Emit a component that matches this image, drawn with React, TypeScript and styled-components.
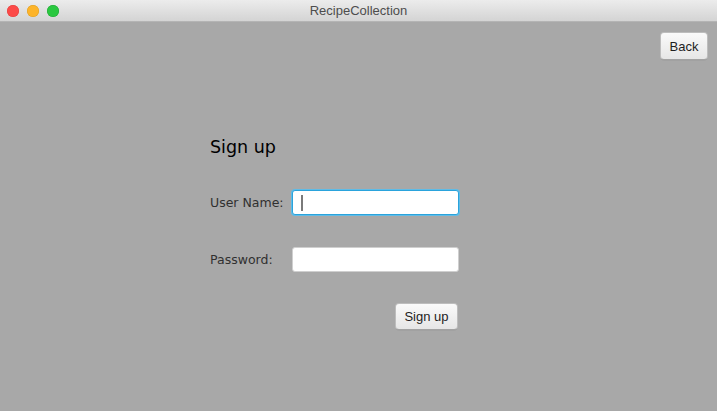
import React from "react";
import styled, { createGlobalStyle } from "styled-components";

const Global = createGlobalStyle`
  html, body { margin: 0; padding: 0; background: #a8a8a8; }
  * { box-sizing: border-box; }
`;

const Window = styled.div`
  width: 717px;
  height: 411px;
  background: #a8a8a8;
  display: flex;
  flex-direction: column;
  overflow: hidden;
`;

const TitleBar = styled.div`
  height: 22px;
  flex: none;
  position: relative;
  display: flex;
  align-items: center;
  justify-content: center;
  background: linear-gradient(#ececec, #d4d4d4);
  border-bottom: 1px solid #b4b4b4;
  font-family: "Liberation Sans", Arial, sans-serif;
  font-size: 13px;
  color: #4d4d4d;
`;

const Lights = styled.div`
  position: absolute;
  left: 7px;
  top: 5px;
  display: flex;
  gap: 8px;
`;

const Light = styled.span<{ $c: string; $b: string }>`
  width: 12px;
  height: 12px;
  border-radius: 50%;
  background: ${(p) => p.$c};
  box-shadow: inset 0 0 0 0.5px ${(p) => p.$b};
`;

const Body = styled.div`
  flex: 1;
  display: flex;
  flex-direction: column;
  padding: 10px 9px 0 210px;
`;

const TopRow = styled.div`
  display: flex;
  justify-content: flex-end;
`;

const Button = styled.button<{ $w: number; $h: number }>`
  width: ${(p) => p.$w}px;
  height: ${(p) => p.$h}px;
  padding: 0;
  border: 1px solid #bdbdbd;
  border-bottom-color: #a2a2a2;
  border-radius: 4px;
  background: linear-gradient(#fafafa, #e6e6e6);
  font-family: "Liberation Sans", Arial, sans-serif;
  font-size: 13px;
  color: #1e1e1e;
  box-shadow: 0 0.5px 0 rgba(0, 0, 0, 0.08);
`;

const Form = styled.div`
  margin-top: 76px;
  width: 249px;
  display: grid;
  grid-template-columns: 82px 167px;
  row-gap: 32px;
  align-items: center;
`;

const Title = styled.div`
  grid-column: 1 / 3;
  height: 22px;
  line-height: 22px;
  font-family: "DejaVu Sans", sans-serif;
  font-size: 17.5px;
  color: #000;
`;

const Label = styled.label`
  font-family: "DejaVu Sans", sans-serif;
  font-size: 12.5px;
  color: #303030;
`;

const Field = styled.div<{ $focus?: boolean }>`
  position: relative;
  height: 25px;
  background: #fff;
  border-radius: 3px;
  border: 1px solid ${(p) => (p.$focus ? "#2aa3dc" : "#cfcfcf")};
  box-shadow: ${(p) => (p.$focus ? "0 0 0 1px #5fbbe6" : "none")};
`;

const Caret = styled.span`
  position: absolute;
  left: 8px;
  top: 4px;
  width: 2px;
  height: 16px;
  background: #7a7a7a;
`;

const ButtonCell = styled.div`
  grid-column: 1 / 3;
  display: flex;
  justify-content: flex-end;
  padding-right: 1px;
  margin-top: -1px;
`;

export default function App() {
  return (
    <>
      <Global />
      <Window>
        <TitleBar>
          <Lights>
            <Light $c="#fc4a48" $b="#e0403e" />
            <Light $c="#fdb429" $b="#dd9e22" />
            <Light $c="#2ac840" $b="#21a534" />
          </Lights>
          RecipeCollection
        </TitleBar>
        <Body>
          <TopRow>
            <Button $w={48} $h={28}>Back</Button>
          </TopRow>
          <Form>
            <Title>Sign up</Title>
            <Label>User Name:</Label>
            <Field $focus>
              <Caret />
            </Field>
            <Label>Password:</Label>
            <Field />
            <ButtonCell>
              <Button $w={63} $h={27}>Sign up</Button>
            </ButtonCell>
          </Form>
        </Body>
      </Window>
    </>
  );
}
